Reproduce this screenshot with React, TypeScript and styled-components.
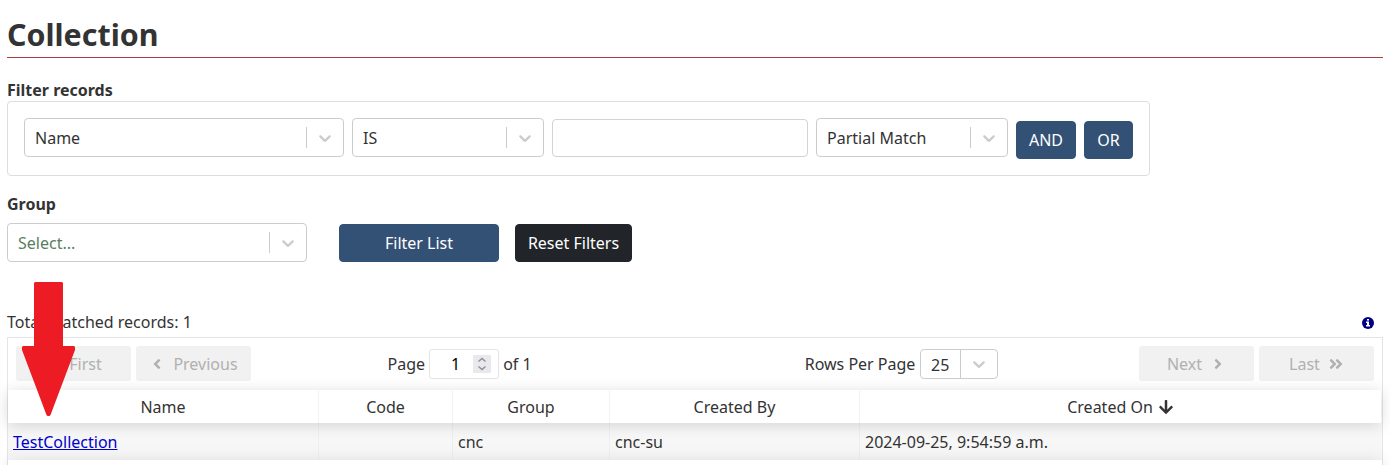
import React from "react";
import styled, { createGlobalStyle } from "styled-components";
import {
  FaAngleDoubleLeft,
  FaAngleDoubleRight,
  FaAngleLeft,
  FaAngleRight,
  FaArrowDown,
} from "react-icons/fa";

const GlobalStyle = createGlobalStyle`
  *, *::before, *::after { box-sizing: border-box; }
  body {
    margin: 0;
    background: #fff;
    color: #333;
    font: 16px/24px "Noto Sans", sans-serif;
    overflow: hidden;
  }
  button, input { font: inherit; }
`;

const Page = styled.main`
  position: relative;
  height: 465px;
  padding: 12px 7px 0;
  overflow: hidden;
`;

const Title = styled.h1`
  margin: 0;
  height: 46px;
  padding-top: 1px;
  font-size: 30.4px;
  line-height: 44px;
  font-weight: 700;
  border-bottom: 1px solid #af3c43;
`;

const Label = styled.div<{ $top: number; $gap?: number }>`
  margin-top: ${(p) => p.$top}px;
  margin-bottom: ${(p) => p.$gap ?? 0}px;
  height: 22px;
  line-height: 23px;
  font-weight: 700;
`;

const FilterBox = styled.section`
  display: flex;
  gap: 8px;
  width: 1143px;
  height: 75px;
  padding: 16px;
  border: 1px solid #ddd;
  border-radius: 4px;
`;

const SelectBox = styled.div<{ $width: number; $compact?: boolean }>`
  display: flex;
  align-items: stretch;
  width: ${(p) => p.$width}px;
  height: ${(p) => (p.$compact ? 30 : 39)}px;
  border: 1px solid #ccc;
  border-radius: 4px;
  background: #fff;
`;

const SelectValue = styled.span<{ $placeholder?: boolean; $compact?: boolean }>`
  display: flex;
  flex: 1;
  align-items: center;
  padding-left: 10px;
  padding-top: ${(p) => (p.$compact ? 2 : 0)}px;
  white-space: nowrap;
  color: ${(p) => (p.$placeholder ? "#5a7d62" : "#333")};
`;

const Separator = styled.span<{ $compact?: boolean }>`
  width: 1px;
  margin: ${(p) => (p.$compact ? 0 : 8)}px 0;
  background: #ccc;
`;

const Indicator = styled.span`
  display: flex;
  align-items: center;
  justify-content: center;
  width: 36px;
  color: #ccc;
`;

const TextInput = styled.input`
  width: 256px;
  height: 38px;
  margin-top: 1px;
  padding: 0 10px;
  border: 1px solid #ced4da;
  border-radius: 4px;
  outline: none;
`;

const Button = styled.button<{ $width: number; $dark?: boolean; $top?: number }>`
  width: ${(p) => p.$width}px;
  height: 38px;
  margin-top: ${(p) => p.$top ?? 0}px;
  padding: 0;
  border: 1px solid ${(p) => (p.$dark ? "#212529" : "#335075")};
  border-radius: 4px;
  background: ${(p) => (p.$dark ? "#212529" : "#335075")};
  color: #fff;
`;

const GroupRow = styled.div`
  display: flex;
  gap: 16px;
  & > :first-child { margin-right: 16px; }
`;

const Summary = styled.div`
  display: flex;
  align-items: center;
  justify-content: space-between;
  height: 24px;
  margin-top: 48px;
  padding-right: 9px;
`;

const InfoMark = styled.svg`
  width: 12px;
  height: 12px;
  margin-top: 2px;
`;

const Table = styled.section`
  margin-top: 3px;
  height: 180px;
  border: 1px solid rgba(0, 0, 0, 0.1);
`;

const Pagination = styled.div`
  display: flex;
  gap: 5px;
  height: 52px;
  padding: 8px;
`;

const PageButton = styled.button`
  display: flex;
  align-items: center;
  justify-content: center;
  gap: 8px;
  width: 115px;
  height: 35px;
  padding: 0;
  border: 0;
  border-radius: 3px;
  background: #f1f1f1;
  color: #b0b0b0;
`;

const PageControls = styled.div`
  display: flex;
  flex: 1;
  justify-content: space-between;
  padding: 0 136px 0 131.6px;
`;

const Control = styled.div<{ $gap: number }>`
  display: flex;
  align-items: center;
  gap: ${(p) => p.$gap}px;
  height: 35px;
  white-space: nowrap;
`;

const PageNumber = styled.div`
  display: flex;
  align-items: center;
  justify-content: flex-end;
  gap: 13px;
  width: 70px;
  height: 30px;
  padding-right: 7px;
  border: 1px solid rgba(0, 0, 0, 0.1);
  border-radius: 3px;
  color: #000;
`;

const Spinner = styled.span`
  display: flex;
  align-items: center;
  justify-content: center;
  width: 18px;
  height: 18px;
  background: #e9e9ed;
`;

const columns = "311px 134px 157px 250px 1fr";

const HeaderRow = styled.div`
  position: relative;
  display: grid;
  grid-template-columns: ${columns};
  width: 1373px;
  height: 33px;
  background: #fff;
  box-shadow: 0 2px 15px 0 rgba(0, 0, 0, 0.15);
`;

const HeaderCell = styled.div`
  display: flex;
  align-items: center;
  justify-content: center;
  gap: 5px;
  border-right: 1px solid rgba(0, 0, 0, 0.05);
  &:last-child { border-right: 0; }
`;

const BodyRow = styled.div`
  display: grid;
  grid-template-columns: ${columns};
  height: 37px;
  background: #f7f7f7;
`;

const BodyCell = styled.div`
  display: flex;
  align-items: center;
  padding: 1px 5px 0;
  border-right: 1px solid rgba(0, 0, 0, 0.03);
  &:last-child { border-right: 0; }
`;

const Link = styled.a`
  color: #0000cc;
  text-decoration: underline;
`;

const TableFooter = styled.div`
  position: relative;
  height: 52px;
  background: #fff;
  box-shadow: 0 0 15px 0 rgba(0, 0, 0, 0.1);
`;

const Pointer = styled.svg`
  position: absolute;
  top: 281px;
  left: 20px;
`;

function Chevron() {
  return (
    <svg width="20" height="20" viewBox="0 0 20 20" fill="currentColor" aria-hidden="true">
      <path d="M4.516 7.548c0.436-0.446 1.043-0.481 1.576 0l3.908 3.747 3.908-3.747c0.533-0.481 1.141-0.446 1.574 0 0.436 0.445 0.408 1.197 0 1.615-0.406 0.418-4.695 4.502-4.695 4.502-0.217 0.223-0.502 0.335-0.787 0.335s-0.57-0.112-0.789-0.335c0 0-4.287-4.084-4.695-4.502s-0.436-1.17 0-1.615z" />
    </svg>
  );
}

interface SelectProps {
  width: number;
  value: string;
  placeholder?: boolean;
  compact?: boolean;
}

function Select({ width, value, placeholder, compact }: SelectProps) {
  return (
    <SelectBox $width={width} $compact={compact}>
      <SelectValue $placeholder={placeholder} $compact={compact}>{value}</SelectValue>
      <Separator $compact={compact} />
      <Indicator>
        <Chevron />
      </Indicator>
    </SelectBox>
  );
}

export default function App() {
  return (
    <>
      <GlobalStyle />
      <Page>
        <Title>Collection</Title>

        <Label $top={21}>Filter records</Label>
        <FilterBox>
          <Select width={320} value="Name" />
          <Select width={192} value="IS" />
          <TextInput aria-label="Filter value" />
          <Select width={192} value="Partial Match" />
          <Button $width={60} $top={3}>AND</Button>
          <Button $width={49} $top={3}>OR</Button>
        </FilterBox>

        <Label $top={17} $gap={8}>Group</Label>
        <GroupRow>
          <Select width={300} value="Select..." placeholder />
          <Button $width={160} $top={1}>Filter List</Button>
          <Button $width={117} $top={1} $dark>Reset Filters</Button>
        </GroupRow>

        <Summary>
          <span>Total matched records: 1</span>
          <InfoMark viewBox="0 0 12 12" aria-hidden="true">
            <circle cx="6" cy="6" r="6" fill="#000080" />
            <rect x="5" y="2" width="2" height="1.6" fill="#fff" />
            <path d="M4 4.6H7V8H8V9.4H4V8H5V6H4Z" fill="#fff" />
          </InfoMark>
        </Summary>

        <Table>
          <Pagination>
            <PageButton disabled><FaAngleDoubleLeft />First</PageButton>
            <PageButton disabled><FaAngleLeft />Previous</PageButton>
            <PageControls>
              <Control $gap={4}>
                Page
                <PageNumber>
                  1
                  <Spinner>
                    <svg width="10" height="14" viewBox="0 0 10 14" fill="none" stroke="#8f8f9d" strokeWidth="1.5">
                      <path d="M1.5 4.5 5 1.5 8.5 4.5M1.5 9.5 5 12.5 8.5 9.5" />
                    </svg>
                  </Spinner>
                </PageNumber>
                of 1
              </Control>
              <Control $gap={4.6}>
                Rows Per Page
                <Select width={78} value="25" compact />
              </Control>
            </PageControls>
            <PageButton disabled>Next<FaAngleRight /></PageButton>
            <PageButton disabled>Last<FaAngleDoubleRight /></PageButton>
          </Pagination>
          <HeaderRow>
            <HeaderCell>Name</HeaderCell>
            <HeaderCell>Code</HeaderCell>
            <HeaderCell>Group</HeaderCell>
            <HeaderCell>Created By</HeaderCell>
            <HeaderCell>Created On<FaArrowDown /></HeaderCell>
          </HeaderRow>
          <BodyRow>
            <BodyCell><Link href="#">TestCollection</Link></BodyCell>
            <BodyCell />
            <BodyCell>cnc</BodyCell>
            <BodyCell>cnc-su</BodyCell>
            <BodyCell>2024-09-25, 9:54:59 a.m.</BodyCell>
          </BodyRow>
          <TableFooter />
        </Table>

        <Pointer width="58" height="137" viewBox="20 281 58 137" aria-hidden="true">
          <path
            d="M35 282H62L63 283V346H74L75 347V350L50.5 415L49.5 416H47.5L46.5 415L22 350V347L23 346H34V283Z"
            fill="#ed1c24"
          />
        </Pointer>
      </Page>
    </>
  );
}
